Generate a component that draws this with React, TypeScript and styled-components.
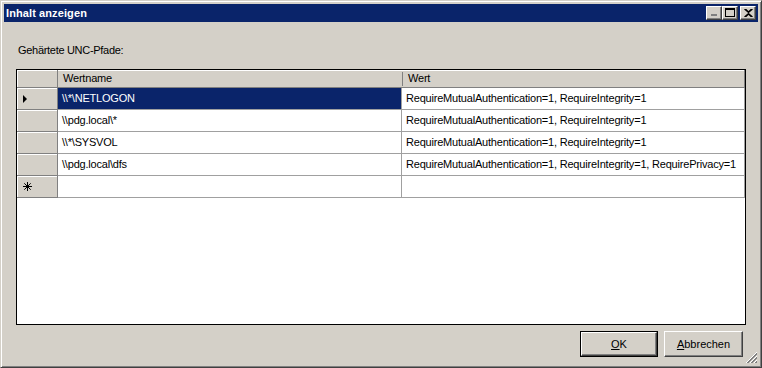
import styled, {createGlobalStyle} from 'styled-components'

const GlobalStyle = createGlobalStyle`
  html, body {
    margin: 0;
    padding: 0;
    background: #d4d0c8;
  }
  body {
    font-family: "Liberation Sans", Arial, sans-serif;
    font-size: 11px;
  }
`

type Row = {name: string, value: string}

const rows: Row[] = [
    {name: '\\\\*\\NETLOGON', value: 'RequireMutualAuthentication=1, RequireIntegrity=1'},
    {name: '\\\\pdg.local\\*', value: 'RequireMutualAuthentication=1, RequireIntegrity=1'},
    {name: '\\\\*\\SYSVOL', value: 'RequireMutualAuthentication=1, RequireIntegrity=1'},
    {name: '\\\\pdg.local\\dfs', value: 'RequireMutualAuthentication=1, RequireIntegrity=1, RequirePrivacy=1'},
]

function App() {
    return (
        <>
            <GlobalStyle/>
            <Window>
                <TitleBar>
                    <Title>Inhalt anzeigen</Title>
                    <CaptionButtons>
                        <CaptionButton>
                            <svg width="8" height="7" viewBox="0 0 8 7">
                                <rect x="1" y="5" width="6" height="2" fill="#808080"/>
                            </svg>
                        </CaptionButton>
                        <CaptionButton>
                            <svg width="10" height="9" viewBox="0 0 10 9">
                                <rect x="0.5" y="0.5" width="9" height="8" fill="none" stroke="#000"/>
                                <rect x="0" y="1" width="10" height="1" fill="#000"/>
                            </svg>
                        </CaptionButton>
                        <CaptionButton $close>
                            <svg width="9" height="8" viewBox="0 0 9 8">
                                <path d="M0.5 0 L4.5 3.5 L8.5 0 M0.5 8 L4.5 4.5 L8.5 8 M1.5 0 L4.5 3 L7.5 0 M1.5 8 L4.5 5 L7.5 8" stroke="#000" strokeWidth="1.2" fill="none"/>
                            </svg>
                        </CaptionButton>
                    </CaptionButtons>
                </TitleBar>
                <Content>
                    <Label>Gehärtete UNC-Pfade:</Label>
                    <Grid>
                        <HeaderCorner/>
                        <HeaderCell>Wertname</HeaderCell>
                        <HeaderCell $divider>Wert</HeaderCell>
                        {rows.map((row, i) => (
                            <GridRow key={i}>
                                <RowHeader>
                                    {i === 0 && <Arrow/>}
                                </RowHeader>
                                <Cell $selected={i === 0}>{row.name}</Cell>
                                <Cell>{row.value}</Cell>
                            </GridRow>
                        ))}
                        <GridRow>
                            <RowHeader>
                                <svg width="9" height="9" viewBox="0 0 9 9">
                                    <path d="M4.5 0 V9 M0 4.5 H9 M1.3 1.3 L7.7 7.7 M7.7 1.3 L1.3 7.7" stroke="#000" strokeWidth="1"/>
                                </svg>
                            </RowHeader>
                            <Cell/>
                            <Cell/>
                        </GridRow>
                    </Grid>
                    <Footer>
                        <DefaultButton>
                            <Button><u>O</u>K</Button>
                        </DefaultButton>
                        <Button $wide><u>A</u>bbrechen</Button>
                    </Footer>
                </Content>
                <Grip>
                    <svg width="12" height="12" viewBox="0 0 12 12">
                        <path d="M11 1 L1 11 M11 5 L5 11 M11 9 L9 11" stroke="#808080" strokeWidth="1"/>
                        <path d="M11 2 L2 11 M11 6 L6 11 M11 10 L10 11" stroke="#808080" strokeWidth="1"/>
                        <path d="M11 0 L0 11 M11 4 L4 11 M11 8 L8 11" stroke="#fff" strokeWidth="1"/>
                    </svg>
                </Grip>
            </Window>
        </>
    )
}

const Window = styled.div`
  position: relative;
  box-sizing: border-box;
  width: 762px;
  height: 368px;
  padding: 3px;
  background: #d4d0c8;
  border: 1px solid;
  border-color: #d4d0c8 #404040 #404040 #d4d0c8;
  box-shadow: inset 1px 1px #fff, inset -1px -1px #808080;
  display: flex;
  flex-direction: column;
`

const TitleBar = styled.div`
  height: 18px;
  background: #0a246a;
  display: flex;
  align-items: center;
  justify-content: space-between;
  padding: 0 2px;
`

const Title = styled.span`
  color: #fff;
  font-weight: bold;
  font-size: 11px;
  letter-spacing: 0.1px;
`

const CaptionButtons = styled.div`
  display: flex;
  align-items: center;
`

const CaptionButton = styled.div<{$close?: boolean}>`
  box-sizing: border-box;
  width: 16px;
  height: 14px;
  margin-left: ${p => p.$close ? '2px' : '0'};
  background: #d4d0c8;
  border: 1px solid;
  border-color: #fff #404040 #404040 #fff;
  box-shadow: inset -1px -1px #808080;
  display: flex;
  align-items: center;
  justify-content: center;
  padding-bottom: 1px;
`

const Content = styled.div`
  flex: 1;
  display: flex;
  flex-direction: column;
  padding: 22px 12px 0 12px;
`

const Label = styled.div`
  padding-left: 2px;
  height: 13px;
  line-height: 13px;
  letter-spacing: -0.3px;
  color: #000;
`

const Grid = styled.div`
  margin-top: 12px;
  box-sizing: border-box;
  width: 730px;
  height: 256px;
  border: 1px solid #000;
  background: #fff;
  display: grid;
  grid-template-columns: 41px 344px 343px;
  grid-auto-rows: max-content;
  align-content: start;
`

const HeaderCorner = styled.div`
  box-sizing: border-box;
  height: 18px;
  background: #d4d0c8;
  border-right: 1px solid #808080;
  border-bottom: 1px solid #808080;
  box-shadow: inset 1px 1px #fff;
`

const HeaderCell = styled.div<{$divider?: boolean}>`
  position: relative;
  box-sizing: border-box;
  height: 18px;
  background: #d4d0c8;
  border-bottom: 1px solid #808080;
  border-right: ${p => p.$divider ? '1px solid #808080' : 'none'};
  padding-left: ${p => p.$divider ? '6px' : '5px'};
  line-height: 16px;
  letter-spacing: -0.2px;
  color: #000;
  box-shadow: inset 0 1px #fff;
  &::before {
    content: '';
    display: ${p => p.$divider ? 'block' : 'none'};
    position: absolute;
    left: 0;
    top: 2px;
    bottom: 1px;
    width: 1px;
    background: #808080;
  }
`

const GridRow = styled.div`
  display: contents;
`

const RowHeader = styled.div`
  box-sizing: border-box;
  height: 22px;
  background: #d4d0c8;
  border-right: 1px solid #808080;
  border-bottom: 1px solid #808080;
  box-shadow: inset 0 1px #fff, inset 1px 0 #fff;
  display: flex;
  align-items: center;
  padding-left: 6px;
`

const Arrow = styled.div`
  width: 0;
  height: 0;
  border-top: 4px solid transparent;
  border-bottom: 4px solid transparent;
  border-left: 4px solid #000;
`

const Cell = styled.div<{$selected?: boolean}>`
  box-sizing: border-box;
  height: 22px;
  border-right: 1px solid #a0a0a0;
  border-bottom: 1px solid #a0a0a0;
  background: ${p => p.$selected ? '#0a246a' : '#fff'};
  color: ${p => p.$selected ? '#fff' : '#000'};
  line-height: 21px;
  padding-left: 4px;
  letter-spacing: -0.2px;
  white-space: nowrap;
  overflow: hidden;
`

const Footer = styled.div`
  display: flex;
  justify-content: flex-end;
  align-items: center;
  gap: 6px;
  margin-top: 6px;
  padding-right: 3px;
`

const DefaultButton = styled.div`
  border: 1px solid #000;
  display: flex;
`

const Button = styled.div<{$wide?: boolean}>`
  box-sizing: border-box;
  width: ${p => p.$wide ? '79px' : '76px'};
  height: ${p => p.$wide ? '26px' : '24px'};
  background: #d4d0c8;
  border: 1px solid;
  border-color: #fff #404040 #404040 #fff;
  box-shadow: inset -1px -1px #808080, inset 1px 1px #d4d0c8;
  display: flex;
  align-items: center;
  justify-content: center;
  color: #000;
  font-size: 11px;
  u {
    text-decoration: underline;
  }
`

const Grip = styled.div`
  position: absolute;
  right: 3px;
  bottom: 3px;
  width: 12px;
  height: 12px;
  display: flex;
`

export default App
